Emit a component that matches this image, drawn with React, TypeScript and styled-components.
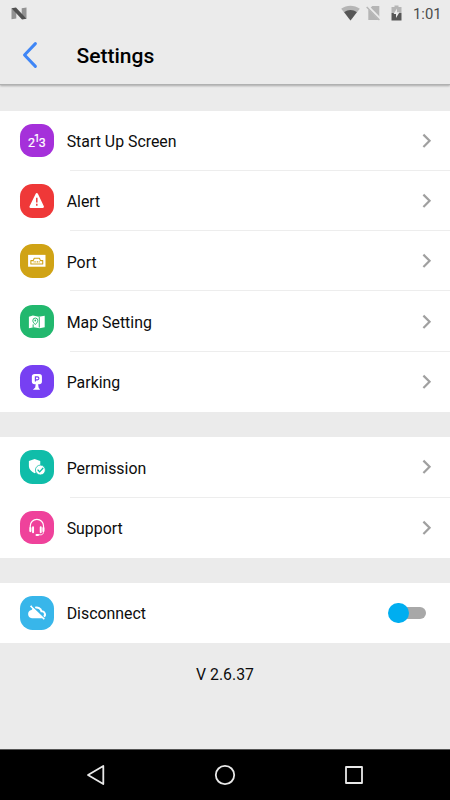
import React from "react";
import styled, { createGlobalStyle } from "styled-components";

const GlobalStyle = createGlobalStyle`
  * { box-sizing: border-box; }
  body { margin: 0; background: #ebebeb; font-family: Roboto, "Liberation Sans", sans-serif; }
  svg { display: block; flex: none; }
`;

const Screen = styled.div`
  width: 450px;
  height: 800px;
  display: flex;
  flex-direction: column;
  background: #ebebeb;
  overflow: hidden;
  color: #0d0d0d;
`;

const Header = styled.header`
  flex: none;
  height: 85.4px;
  border-bottom: 1px solid #b0b1b1;
  box-shadow: 0 1px 2px rgba(0, 0, 0, 0.28);
`;

const StatusBar = styled.div`
  height: 26px;
  display: flex;
  align-items: center;
  padding: 0 9px 0 11px;
`;

const StatusIcons = styled.div`
  display: flex;
  align-items: center;
  margin-left: auto;
`;

const WifiSlot = styled.span`
  margin-right: 6px;
`;

const BatterySlot = styled.span`
  margin-left: 10.5px;
`;

const Clock = styled.time`
  width: 28px;
  margin-left: 11px;
  font-size: 14.8px;
  line-height: 26px;
  color: #4c4c4c;
  padding-top: 2px;
  white-space: nowrap;
`;

const TitleBar = styled.div`
  height: 58px;
  display: flex;
  align-items: center;
  padding-left: 21px;
`;

const Title = styled.h1`
  margin: 1px 0 0 37.5px;
  font-size: 21px;
  line-height: 28px;
  font-weight: 500;
  color: #000;
`;

const BackButton = styled.button`
  border: 0;
  padding: 0;
  background: none;
`;

const Content = styled.main`
  flex: 1;
  padding-top: 25.2px;
  display: flex;
  flex-direction: column;
  gap: 25.2px;
`;

const Group = styled.section`
  background: #fff;
`;

const Row = styled.div`
  height: 60.3px;
  display: flex;
  align-items: center;
  padding-left: 20px;
`;

const Badge = styled.span<{ $color: string }>`
  flex: none;
  width: 33.6px;
  height: 33.6px;
  margin-bottom: 0.6px;
  border-radius: 12.5px;
  background: ${(p) => p.$color};
`;

const RowBody = styled.div<{ $divider: boolean }>`
  flex: 1;
  align-self: stretch;
  margin-left: 16.4px;
  border-bottom: 1px solid ${(p) => (p.$divider ? "#ededed" : "transparent")};
  display: flex;
  align-items: center;
  justify-content: space-between;
  padding-right: 18.5px;
`;

const Label = styled.span`
  margin-left: -3.3px;
  padding-top: 3.6px;
  font-size: 15.88px;
  line-height: 20px;
`;

const Switch = styled.button`
  width: 38px;
  height: 21px;
  padding: 0;
  margin: 1px 5.5px 0 0;
  border: 0;
  background: none;
  display: flex;
  align-items: center;
`;

const Knob = styled.span`
  flex: none;
  z-index: 1;
  width: 20.6px;
  height: 20.6px;
  border-radius: 50%;
  background: #00aef0;
`;

const Track = styled.span`
  width: 27px;
  height: 12px;
  margin-left: -10px;
  border-radius: 6px;
  background: #a8a8a8;
`;

const Version = styled.p`
  margin: -5px 0 0;
  text-align: center;
  font-size: 15.8px;
  line-height: 22px;
`;

const NavBar = styled.nav`
  flex: none;
  height: 51px;
  background: #000;
  border-top: 1px solid #555;
  display: flex;
  justify-content: space-between;
  align-items: center;
  padding: 0 86px 0 85px;
`;

const glyphs = {
  numbers: (
    <g fill="#fff" fontFamily="Roboto, sans-serif" fontSize="12.5" stroke="#fff" strokeWidth=".25">
      <text x="8" y="23.4">2</text>
      <text x="14.2" y="18.2" fontSize="10.5">1</text>
      <text x="19" y="23.4">3</text>
    </g>
  ),
  alert: (
    <>
      <path d="M17 10.4 23 23H10.8Z" fill="#fff" stroke="#fff" strokeWidth="2.5" strokeLinejoin="round" />
      <path d="M17 14v4.6M17 20v1.9" stroke="#ef3838" strokeWidth="1.5" />
    </>
  ),
  port: (
    <>
      <rect x="8.2" y="11" width="17.6" height="12" fill="#fff" />
      <path d="M11 20.2v-3.4h2.4l1-2.3h5.3l1 2.3H23v3.4Z" fill="none" stroke="#d0a315" strokeWidth="1.1" strokeLinejoin="round" />
      <path d="M13.8 18.1h6.8" stroke="#d0a315" strokeWidth="1.1" strokeDasharray="1 .7" />
    </>
  ),
  map: (
    <>
      <path d="m9 12 4-1.3 6 1.3 6-1.2v11.7l-5.2 1-5.8-1-5 1Z" fill="#fff" />
      <path d="M19.5 12.2v10.6M15.5 19.8c-2-2-2.5-3-2.5-4.1a2.5 2.5 0 0 1 5 0c0 1.1-.6 2.1-2.5 4.1Zm-2.2-.2v3.2" fill="none" stroke="#22b86e" strokeWidth="1" />
      <circle cx="15.5" cy="15.7" r=".9" fill="#22b86e" />
    </>
  ),
  parking: (
    <>
      <rect x="12" y="9" width="10.2" height="10.6" rx="2.8" fill="#fff" />
      <path d="M16 18.5h2.2l.6 4.3 1.5 2.2H13l2.4-2.2Z" fill="#fff" />
      <path d="M15.6 16.8V12h2a1.5 1.5 0 0 1 0 3h-2" fill="none" stroke="#7740f2" strokeWidth="1.2" />
    </>
  ),
  permission: (
    <>
      <path d="m14.8 9 5.7 2.1v5.6c-1.8.4-4 1.9-4.1 5.8l-1.6 1c-3.7-1.9-5.8-4-5.8-7v-5.4Z" fill="#fff" />
      <circle cx="20.6" cy="20.3" r="5" fill="#fff" stroke="#10bda9" strokeWidth=".8" />
      <path d="m18.2 20.3 1.7 1.8 3.3-3.6" fill="none" stroke="#10bda9" strokeWidth="1.3" strokeLinecap="round" />
    </>
  ),
  support: (
    <g fill="none" stroke="#fff" strokeLinecap="round">
      <path d="M10.4 16.6v-1.5a6.7 6.7 0 0 1 13.4 0v1.5" strokeWidth="1.2" />
      <path d="M10.5 17.3v3M23.7 17.3v3" strokeWidth="2.2" />
      <path d="M13.2 16.4v5M21 16.4v5" strokeWidth="2" />
      <path d="M23.6 20.5v1.4c0 1.3-1.2 2.2-2.7 2.2h-2.6" strokeWidth="1" />
      <path d="M16.7 24.2h1.5" strokeWidth="2" />
    </g>
  ),
  offline: (
    <>
      <path d="M11.6 14.2A4.2 4.2 0 0 0 12 22.5h11L13.3 12.3Z" fill="#fff" />
      <path d="M15.3 11.8a5 5 0 0 1 6.4 3.6 3.2 3.2 0 0 1 2.2 5.8" fill="none" stroke="#fff" strokeWidth="2" />
      <path d="m10.7 10 14 13.5" stroke="#fff" strokeWidth="1.8" />
      <path d="m12.2 9.8 13 12.6" stroke="#38b6ea" strokeWidth="1" />
    </>
  ),
};

type Item = { label: string; color: string; glyph: keyof typeof glyphs; toggle?: boolean };

const groups: Item[][] = [
  [
    { label: "Start Up Screen", color: "#a530da", glyph: "numbers" },
    { label: "Alert", color: "#ef3838", glyph: "alert" },
    { label: "Port", color: "#d0a315", glyph: "port" },
    { label: "Map Setting", color: "#22b86e", glyph: "map" },
    { label: "Parking", color: "#7740f2", glyph: "parking" },
  ],
  [
    { label: "Permission", color: "#10bda9", glyph: "permission" },
    { label: "Support", color: "#ef429b", glyph: "support" },
  ],
  [{ label: "Disconnect", color: "#38b6ea", glyph: "offline", toggle: true }],
];

const Chevron = () => (
  <svg width="10" height="17" viewBox="0 0 10 17" fill="none" stroke="#a0a0a0" strokeWidth="2.2">
    <path d="M1.4 2.6 7.6 8.8 1.4 15" />
  </svg>
);

export default function App() {
  return (
    <>
      <GlobalStyle />
      <Screen>
        <Header>
          <StatusBar>
            <svg width="16" height="13" viewBox="0 0 16 13">
              <path d="M.5 1.2 5.3 5v6.6L.5 12.2ZM10.7 1.2l4.8-.7v11.3l-4.8-4.4Z" fill="#929292" />
              <path d="M.5 1.2 5 .5l10.5 11.3-4.5.7Z" fill="#505050" />
            </svg>
            <StatusIcons>
              <WifiSlot>
                <svg width="19" height="16" viewBox="0 0 19 16">
                  <path d="M.2 3.7C5.6-.3 13.2-.3 18.8 3.7L9.5 15.4Z" fill="#b5b5b5" />
                  <path d="M3.2 7.2c3.8-2.8 8.8-2.8 12.6 0L9.5 15.4Z" fill="#565656" />
                </svg>
              </WifiSlot>
              <svg width="15" height="16" viewBox="0 0 15 16">
                <path d="M6.3 1h7v14h-11V5Z" fill="#b5b5b5" />
                <path d="m1.4 1.3 13 13.3" stroke="#ebebeb" strokeWidth="3" />
                <path d="m.7 2 12.7 13" stroke="#b5b5b5" strokeWidth="1.4" />
              </svg>
              <BatterySlot>
                <svg width="11" height="16" viewBox="0 0 11 16">
                  <path d="M.5 2h3V.5h4V2h3v6H.5Z" fill="#b5b5b5" />
                  <path d="M.5 8h10v7.5H.5Z" fill="#565656" />
                  <path d="M6 3.5 2.5 9H5v4l3.5-5.7H6Z" fill="#ebebeb" />
                </svg>
              </BatterySlot>
            </StatusIcons>
            <Clock>1:01</Clock>
          </StatusBar>
          <TitleBar>
            <BackButton aria-label="Back">
              <svg width="18" height="28" viewBox="0 0 18 28" fill="none" stroke="#3f86f6" strokeWidth="3" strokeLinecap="round" strokeLinejoin="round">
                <path d="M14.4 2.6 3.5 14l10.9 11.4" />
              </svg>
            </BackButton>
            <Title>Settings</Title>
          </TitleBar>
        </Header>
        <Content>
          {groups.map((items) => (
            <Group key={items[0].label}>
              {items.map((item, i) => (
                <Row key={item.label}>
                  <Badge $color={item.color}>
                    <svg width="33.6" height="33.6" viewBox="0 0 34 34">{glyphs[item.glyph]}</svg>
                  </Badge>
                  <RowBody $divider={i < items.length - 1}>
                    <Label>{item.label}</Label>
                    {item.toggle ? (
                      <Switch role="switch" aria-checked={false} aria-label={item.label}>
                        <Knob />
                        <Track />
                      </Switch>
                    ) : (
                      <Chevron />
                    )}
                  </RowBody>
                </Row>
              ))}
            </Group>
          ))}
          <Version>V 2.6.37</Version>
        </Content>
        <NavBar>
          <svg width="20" height="22" viewBox="0 0 20 22" fill="none" stroke="#e8e8e8" strokeWidth="1.8" strokeLinejoin="round">
            <path d="M18.3 2v18L3 11Z" />
          </svg>
          <svg width="22" height="22" viewBox="0 0 22 22" fill="none" stroke="#e8e8e8" strokeWidth="1.8">
            <circle cx="11" cy="11" r="9.2" />
          </svg>
          <svg width="20" height="20" viewBox="0 0 20 20" fill="none" stroke="#e8e8e8" strokeWidth="1.8" strokeLinejoin="round">
            <rect x="2" y="2" width="16" height="16" />
          </svg>
        </NavBar>
      </Screen>
    </>
  );
}
